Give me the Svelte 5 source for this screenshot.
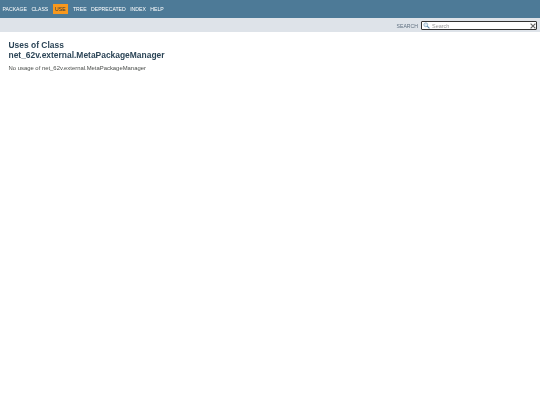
<script>
  const navItems = ['PACKAGE', 'CLASS', 'USE', 'TREE', 'DEPRECATED', 'INDEX', 'HELP'];
</script>

<header class="top-nav">
  <ul class="nav-list">
    {#each navItems as item}
      <li class:active={item === 'USE'}>{item}</li>
    {/each}
  </ul>
</header>

<div class="sub-nav">
  <label class="search-label" for="search">SEARCH</label>
  <div class="search-box">
    <svg class="glass" viewBox="0 0 10 10" width="7" height="7" aria-hidden="true">
      <circle cx="4" cy="4" r="2.8" fill="#dfeaf2" stroke="#8fb0c8" stroke-width="1.2" />
      <path d="M6 6 L9.2 9.2" stroke="#5f8cab" stroke-width="1.5" />
    </svg>
    <input id="search" type="text" placeholder="Search" />
    <svg class="clear" viewBox="0 0 10 10" width="6" height="6" aria-hidden="true">
      <path d="M1 1 L9 9 M9 1 L1 9" stroke="#666" stroke-width="2" />
    </svg>
  </div>
</div>

<main class="content">
  <h1>Uses of Class<br />net_62v.external.MetaPackageManager</h1>
  <p>No usage of net_62v.external.MetaPackageManager</p>
</main>

<style>
  :global(body) {
    margin: 0;
    background: #fff;
    font-family: "Liberation Sans", Arial, sans-serif;
  }

  .top-nav {
    height: 18px;
    background-color: #4d7a97;
    display: flex;
    align-items: center;
  }

  /* the reference is a downscaled capture, so the text is a bit soft */
  .search-label, .search-box, h1, p {
    filter: blur(0.25px);
  }

  .nav-list {
    filter: blur(0.12px);
    list-style: none;
    margin: 0;
    padding: 0 0 0 2.5px;
    display: flex;
    align-items: center;
    gap: 4.4px;
    font-size: 5.15px;
    color: #fff;
  }

  .nav-list li {
    line-height: 10px;
  }

  .nav-list li.active {
    background-color: #f8981d;
    color: #253441;
    padding: 0 2.4px;
    margin-right: 0.5px;
  }

  .sub-nav {
    height: 13px;
    background-color: #dee3e9;
    display: flex;
    align-items: center;
    justify-content: flex-end;
    padding: 1px 3px 0 0;
    gap: 3px;
  }

  .search-label {
    font-size: 5.15px;
    color: #5f7080;
  }

  .search-box {
    width: 112.5px;
    height: 7.5px;
    background: #fff;
    border: 1px solid #333;
    border-radius: 1px;
    display: flex;
    align-items: center;
    padding: 0 0.5px 0 1px;
    gap: 2px;
  }

  .glass, .clear {
    flex: none;
  }

  .search-box input {
    flex: 1;
    min-width: 0;
    border: 0;
    padding: 0;
    outline: 0;
    background: transparent;
    font-family: inherit;
    font-size: 5.5px;
    height: 7.5px;
  }

  .search-box input::placeholder {
    color: #999;
  }

  .content {
    padding: 8px 8.5px 0;
  }

  h1 {
    margin: 0;
    font-size: 8.45px;
    line-height: 10px;
    font-weight: bold;
    color: #2c4557;
  }

  p {
    margin: 5px 0 0;
    font-size: 5.9px;
    line-height: 7px;
    color: #4a4d4a;
  }
</style>
